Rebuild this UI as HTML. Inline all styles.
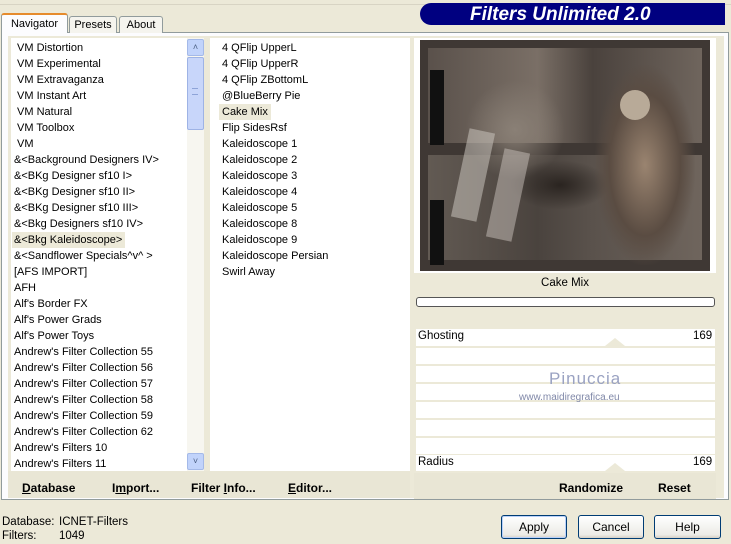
<!DOCTYPE html>
<html><head><style>
*{margin:0;padding:0;box-sizing:border-box}
body{width:731px;height:544px;background:#ECE9D8;font-family:"Liberation Sans",sans-serif;font-size:11px;color:#000;position:relative;overflow:hidden}
.a{position:absolute}
.tab{position:absolute;border:1px solid #919B9C;border-bottom:none;background:#F5F4EE;text-align:center;font-size:11px;border-radius:3px 3px 0 0}
.list div{height:16px;line-height:16px;padding-left:3px;white-space:nowrap}
.sel{background:#ECE9D8;display:inline-block;padding-right:3px}
.bb{font-weight:bold;font-size:12px;position:absolute;top:481px}
.btn{position:absolute;top:515px;height:24px;border:1px solid #003C74;border-radius:3px;background:linear-gradient(#fff,#ECEBE6 85%,#D6D0C5);text-align:center;line-height:22px;font-size:12px}
.row{position:absolute;left:416px;width:299px;background:#fff}
</style></head><body>
<div class="a" style="left:0;top:0;width:731px;height:5px;border-bottom:1px solid #d8d4c4"></div>
<div class="a" style="left:420px;top:3px;width:305px;height:22px;background:#000080;border-radius:22px 0 0 22px"></div>
<div class="a" style="left:470px;top:3px;font:italic bold 19px 'Liberation Sans',sans-serif;color:#fff;line-height:23px">Filters Unlimited 2.0</div>
<div class="a" style="left:1px;top:32px;width:728px;height:468px;border:1px solid #919B9C;background:#FCFCFE"></div>
<div class="tab" style="left:1px;top:13px;width:67px;height:20px;background:#FCFCFE;border-top:2px solid #E68B2C;line-height:18px;z-index:2">Navigator</div>
<div class="tab" style="left:69px;top:16px;width:48px;height:17px;line-height:16px">Presets</div>
<div class="tab" style="left:119px;top:16px;width:44px;height:17px;line-height:16px">About</div>
<div class="a" style="left:8px;top:36px;width:716px;height:462px;background:#ECE9D8"></div>
<div class="a list" style="left:11px;top:38px;width:176px;height:433px;background:#fff;padding-top:2px;font-size:11px">
<div>&nbsp;VM Distortion</div><div>&nbsp;VM Experimental</div><div>&nbsp;VM Extravaganza</div><div>&nbsp;VM Instant Art</div><div>&nbsp;VM Natural</div><div>&nbsp;VM Toolbox</div><div>&nbsp;VM</div>
<div>&amp;&lt;Background Designers IV&gt;</div><div>&amp;&lt;BKg Designer sf10 I&gt;</div><div>&amp;&lt;BKg Designer sf10 II&gt;</div><div>&amp;&lt;BKg Designer sf10 III&gt;</div><div>&amp;&lt;Bkg Designers sf10 IV&gt;</div>
<div style="padding-left:1px"><span class="sel" style="padding-left:2px">&amp;&lt;Bkg Kaleidoscope&gt;</span></div>
<div>&amp;&lt;Sandflower Specials^v^ &gt;</div><div>[AFS IMPORT]</div><div>AFH</div><div>Alf's Border FX</div><div>Alf's Power Grads</div><div>Alf's Power Toys</div>
<div>Andrew's Filter Collection 55</div><div>Andrew's Filter Collection 56</div><div>Andrew's Filter Collection 57</div><div>Andrew's Filter Collection 58</div><div>Andrew's Filter Collection 59</div><div>Andrew's Filter Collection 62</div><div>Andrew's Filters 10</div><div>Andrew's Filters 11</div>
</div>
<div class="a" style="left:187px;top:38px;width:17px;height:433px;background:#F7F6F0"></div>
<div class="a" style="left:187px;top:39px;width:17px;height:17px;background:#C1D3FB;border:1px solid #A4B9E8;border-radius:2px;color:#4D6185;font-size:9px;text-align:center;line-height:15px">&#x2C4;</div>
<div class="a" style="left:187px;top:57px;width:17px;height:73px;background:#C8D6FA;border:1px solid #9EB3E5;border-radius:2px"></div>
<div class="a" style="left:192px;top:88px;width:6px;height:7px;border-top:1px solid #8EA4D8;border-bottom:1px solid #8EA4D8"></div>
<div class="a" style="left:187px;top:453px;width:17px;height:17px;background:#C1D3FB;border:1px solid #A4B9E8;border-radius:2px;color:#4D6185;font-size:9px;text-align:center;line-height:15px">&#x2C5;</div>
<div class="a list" style="left:210px;top:38px;width:200px;height:433px;background:#fff;padding-top:2px;padding-left:9px;font-size:11px">
<div>4 QFlip UpperL</div><div>4 QFlip UpperR</div><div>4 QFlip ZBottomL</div><div>@BlueBerry Pie</div>
<div style="padding-left:0"><span class="sel" style="padding-left:3px">Cake Mix</span></div>
<div>Flip SidesRsf</div><div>Kaleidoscope 1</div><div>Kaleidoscope 2</div><div>Kaleidoscope 3</div><div>Kaleidoscope 4</div><div>Kaleidoscope 5</div><div>Kaleidoscope 8</div><div>Kaleidoscope 9</div><div>Kaleidoscope Persian</div><div>Swirl Away</div>
</div>
<div class="a" style="left:8px;top:471px;width:402px;height:27px;background:#E9E6D5"></div>
<div class="bb" style="left:22px"><u>D</u>atabase</div>
<div class="bb" style="left:112px">I<u>m</u>port...</div>
<div class="bb" style="left:191px">Filter <u>I</u>nfo...</div>
<div class="bb" style="left:288px"><u>E</u>ditor...</div>
<div class="a" style="left:414px;top:38px;width:302px;height:235px;background:#fff"></div>
<div class="a" style="left:420px;top:40px;width:290px;height:231px;background:#3F3834;overflow:hidden">
<div class="a" style="left:8px;top:8px;width:274px;height:95px;background:linear-gradient(90deg,#5a514b,#7a6f66 40%,#4a423d 60%,#6f655d);"></div>
<div class="a" style="left:8px;top:115px;width:274px;height:105px;background:linear-gradient(90deg,#625a53,#4a433e 40%,#5a524c 60%,#6f655d);"></div>
<div class="a" style="left:45px;top:40px;width:100px;height:100px;border-radius:50%;background:radial-gradient(#8a8076,transparent 70%)"></div>
<div class="a" style="left:90px;top:120px;width:100px;height:50px;border-radius:50%;background:radial-gradient(#2a2420,transparent 70%)"></div>
<div class="a" style="left:175px;top:25px;width:100px;height:200px;border-radius:40%;background:radial-gradient(#9a8470,#5a4c42 50%,transparent 72%)"></div>
<div class="a" style="left:200px;top:50px;width:30px;height:30px;border-radius:50%;background:#b8aa98"></div>
<div class="a" style="left:10px;top:30px;width:14px;height:75px;background:#111"></div>
<div class="a" style="left:10px;top:160px;width:14px;height:65px;background:#111"></div>
<div class="a" style="left:40px;top:90px;width:26px;height:90px;background:#c9c2bb;opacity:.55;transform:rotate(12deg)"></div>
<div class="a" style="left:75px;top:110px;width:26px;height:90px;background:#c9c2bb;opacity:.5;transform:rotate(12deg)"></div>
</div>
<div class="a" style="left:414px;top:273px;width:302px;height:226px;background:#ECE9D8"></div>
<div class="a" style="left:414px;top:277px;width:302px;text-align:center;font-size:11.5px">Cake Mix</div>
<div class="a" style="left:416px;top:297px;width:299px;height:10px;border:1px solid #555;border-radius:3px;background:#fff"></div>
<div class="row" style="top:329px;height:17px"></div>
<div class="row" style="top:348px;height:16px"></div>
<div class="row" style="top:366px;height:16px"></div>
<div class="row" style="top:384px;height:16px"></div>
<div class="row" style="top:402px;height:16px"></div>
<div class="row" style="top:420px;height:16px"></div>
<div class="row" style="top:438px;height:16px"></div>
<div class="row" style="top:455px;height:16px"></div>
<div class="a" style="left:605px;top:338px;width:0;height:0;border-left:10px solid transparent;border-right:10px solid transparent;border-bottom:8px solid #ECE9D8"></div>
<div class="a" style="left:605px;top:463px;width:0;height:0;border-left:10px solid transparent;border-right:10px solid transparent;border-bottom:8px solid #ECE9D8"></div>
<div class="a" style="left:418px;top:330px;font-size:11.5px">Ghosting</div>
<div class="a" style="left:693px;top:330px;font-size:11.5px">169</div>
<div class="a" style="left:418px;top:456px;font-size:11.5px">Radius</div>
<div class="a" style="left:693px;top:456px;font-size:11.5px">169</div>
<div class="a" style="left:549px;top:369px;font-size:17px;color:#9AA2C2;letter-spacing:1px">Pinuccia</div>
<div class="a" style="left:519px;top:392px;font-size:10px;color:#8088A8">www.maidiregrafica.eu</div>
<div class="a" style="left:414px;top:473px;width:302px;height:26px;background:#E9E6D5"></div>
<div class="bb" style="left:559px">Randomize</div>
<div class="bb" style="left:658px">Reset</div>
<div class="a" style="left:2px;top:515px;font-size:11.5px;line-height:14px">Database:<br>Filters:</div>
<div class="a" style="left:59px;top:515px;font-size:11.5px;line-height:14px">ICNET-Filters<br>1049</div>
<div class="btn" style="left:501px;width:66px;box-shadow:inset 0 0 0 1px #B9D1FA">Apply</div>
<div class="btn" style="left:578px;width:66px">Cancel</div>
<div class="btn" style="left:654px;width:67px">Help</div>
</body></html>
